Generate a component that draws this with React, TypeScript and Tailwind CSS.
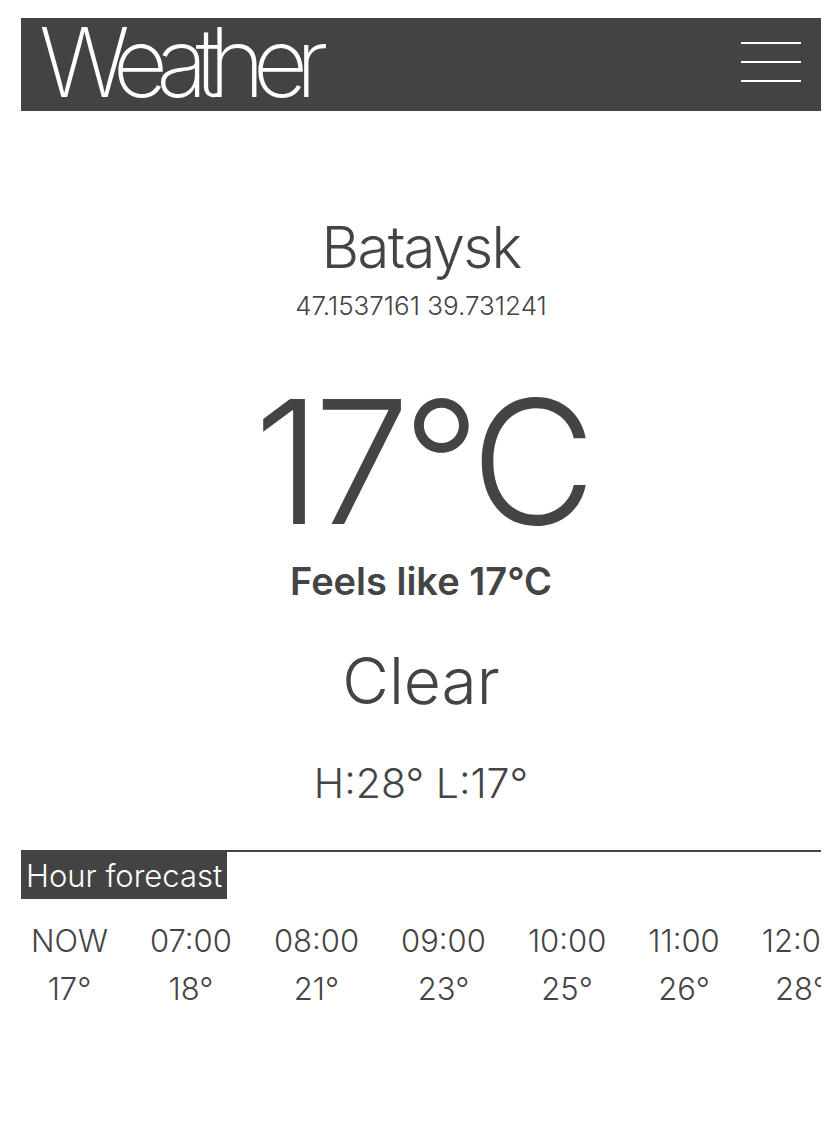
import React from 'react';

const hours = [
  { time: 'NOW', temp: '17°' },
  { time: '07:00', temp: '18°' },
  { time: '08:00', temp: '21°' },
  { time: '09:00', temp: '23°' },
  { time: '10:00', temp: '25°' },
  { time: '11:00', temp: '26°' },
  { time: '12:00', temp: '28°' },
  { time: '13:00', temp: '28°' },
];

const App: React.FC = () => {
  return (
    <div className="min-h-screen bg-white pl-[21px] pt-[18px] text-[#444] font-['Inter','Liberation_Sans',sans-serif]">
      <div className="w-[800px]">
        <header className="flex h-[93px] items-center justify-between bg-[#434343] pl-[18px] pr-[20px]">
          <h1 className="-mt-[5px] text-[96px] font-extralight leading-none tracking-[-0.13em] text-white">Weather</h1>
          <button className="mb-[5px] flex w-[60px] flex-col gap-[17px]" aria-label="menu">
            <span className="block h-[2px] w-full bg-white" />
            <span className="block h-[2px] w-full bg-white" />
            <span className="block h-[2px] w-full bg-white" />
          </button>
        </header>

        <main className="flex flex-col items-center text-center">
          <h2 className="mt-[107px] text-[58px] font-light leading-none tracking-[-0.03em]">Bataysk</h2>
          <p className="mt-[17px] text-[26px] font-light leading-none">47.1537161 39.731241</p>
          <p className="mt-[56px] text-[172px] font-light leading-none tracking-[-0.045em]">17°C</p>
          <p className="mt-[15px] text-[38px] font-semibold leading-none">Feels like 17°C</p>
          <p className="mt-[49px] text-[64px] font-light leading-none">Clear</p>
          <p className="mt-[50px] text-[41px] font-light leading-none">H:28° L:17°</p>
        </main>

        <section className="mt-[46px] border-t-2 border-[#444]">
          <div className="inline-block bg-[#434343] px-[5px] py-[8px] text-[31px] font-light leading-none text-white">
            Hour forecast
          </div>
          <div className="mt-[23px] flex gap-[42px] overflow-hidden pl-[10px]">
            {hours.map((h) => (
              <div key={h.time} className="flex shrink-0 flex-col items-center gap-[11px] text-[31px] font-light leading-[1.2]">
                <span>{h.time}</span>
                <span>{h.temp}</span>
              </div>
            ))}
          </div>
        </section>
      </div>
    </div>
  );
};

export default App;
